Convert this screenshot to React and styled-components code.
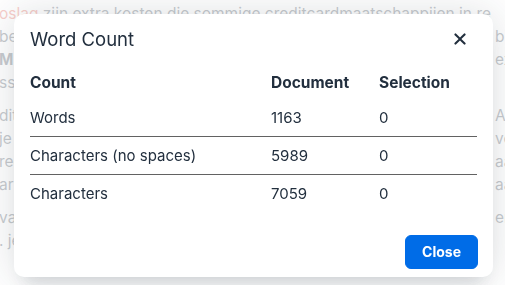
import React from 'react';
import styled, { createGlobalStyle } from 'styled-components';

const rows = [
    { label: 'Words', document: 1163, selection: 0 },
    { label: 'Characters (no spaces)', document: 5989, selection: 0 },
    { label: 'Characters', document: 7059, selection: 0 },
];

// the article behind the dialog: only the edges of each line show
function backgroundText() {
    return [
        [
            [<><Flagged>oslag</Flagged> zijn extra kosten die sommige creditcardmaatschappijen in re</>, ''],
            ['bedrijven die betalingen accepteren', 'bij'],
            [<><strong>MIF</strong> is de interchange fee</>, 'extra'],
            ['ssen de banken', ''],
        ],
        [
            ['dit zijn de kosten van de bank', 'ABN'],
            ['je betaalt per transactie', 'verder'],
            ['regels van de kaartmaatschappij', 'aan'],
            ['ar de bedragen per maand', 'aan'],
        ],
        [
            ['va de rekening', 'er'],
            ['. je ontvangt een overzicht', ''],
        ],
    ];
}

export default function App () {
    return (
        <>
            <GlobalStyle />
            <Page>
                {backgroundText().map((para, i) => (
                    <Paragraph key={i}>
                        {para.map(([start, end], j) => (
                            <Line key={j}>
                                <LineStart>{start}</LineStart>
                                <LineEnd>{end}</LineEnd>
                            </Line>
                        ))}
                    </Paragraph>
                ))}
            </Page>
            <Backdrop>
                <Dialog role="dialog">
                    <Header>
                        <Title>Word Count</Title>
                        <IconButton aria-label="Close">
                            <svg width="24" height="24" viewBox="0 0 24 24">
                                <path
                                    d="M17.3 8.2 13.4 12l3.9 3.8a1 1 0 0 1-1.5 1.5L12 13.4l-3.8 3.9a1 1 0 0 1-1.5-1.5l3.9-3.8-3.9-3.8a1 1 0 0 1 1.5-1.5l3.8 3.9 3.8-3.9a1 1 0 0 1 1.5 1.5Z"
                                    fill="currentColor"
                                />
                            </svg>
                        </IconButton>
                    </Header>
                    <Body>
                        <Table>
                            <thead>
                                <tr>
                                    <Th $width="241px">Count</Th>
                                    <Th $width="108px">Document</Th>
                                    <Th>Selection</Th>
                                </tr>
                            </thead>
                            <tbody>
                                {rows.map(row => (
                                    <Tr key={row.label}>
                                        <Td>{row.label}</Td>
                                        <Td>{row.document}</Td>
                                        <Td>{row.selection}</Td>
                                    </Tr>
                                ))}
                            </tbody>
                        </Table>
                    </Body>
                    <Footer>
                        <PrimaryButton>Close</PrimaryButton>
                    </Footer>
                </Dialog>
            </Backdrop>
        </>
    );
}

const GlobalStyle = createGlobalStyle`
    html, body {
        margin: 0;
        padding: 0;
        background: #fff;
        overflow: hidden;
    }
    body {
        font-family: Inter, "Noto Sans", sans-serif;
        color: #222f3e;
    }
`;

const Page = styled.div`
    width: 505px;
    height: 285px;
    overflow: hidden;
    padding-top: 2px;
    box-sizing: border-box;
`;

const Paragraph = styled.p`
    margin: 0 0 10px;
    font-size: 15.5px;
    line-height: 23px;
    color: #222f3e;
`;

const Line = styled.div`
    display: flex;
    justify-content: space-between;
    white-space: nowrap;
    margin-left: -1px;
`;

const LineStart = styled.span`
    flex: 1;
    overflow: hidden;
`;

const LineEnd = styled.span`
    flex: 0 0 10px;
    overflow: hidden;
`;

const Flagged = styled.span`
    color: #e03e2d;
`;

const Backdrop = styled.div`
    position: fixed;
    inset: 0;
    background: rgba(255, 255, 255, 0.75);
    display: flex;
    align-items: center;
    justify-content: center;
`;

const Dialog = styled.div`
    width: 479px;
    margin: 5px 0 0 2px;
    background: #fff;
    border-radius: 10px;
    box-shadow: 0 16px 16px -10px rgba(34, 47, 62, 0.15), 0 0 40px 1px rgba(34, 47, 62, 0.15);
    display: flex;
    flex-direction: column;
`;

const Header = styled.div`
    display: flex;
    align-items: center;
    justify-content: space-between;
    padding: 8px 16px 0 16px;
`;

const Title = styled.h1`
    margin: 0;
    font-size: 18.5px;
    font-weight: 400;
    line-height: 26px;
    color: #222f3e;
`;

const IconButton = styled.button`
    width: 34px;
    height: 34px;
    padding: 0;
    border: 0;
    background: transparent;
    color: #222f3e;
    display: flex;
    align-items: center;
    justify-content: center;
    cursor: pointer;
`;

const Body = styled.div`
    padding: 16px 16px 15px;
`;

const Table = styled.table`
    width: 100%;
    border-collapse: collapse;
    font-size: 15px;
    line-height: 21px;
    color: #222f3e;
`;

const Th = styled.th`
    text-align: left;
    font-weight: 700;
    font-size: 15.5px;
    padding: 0 0 6px;
    width: ${p => p.$width || 'auto'};
`;

const Tr = styled.tr`
    border-bottom: 1px solid #626262;
    &:last-child {
        border-bottom: none;
    }
`;

const Td = styled.td`
    padding: 8px 0;
    text-align: left;
`;

const Footer = styled.div`
    display: flex;
    justify-content: flex-end;
    padding: 8px 15px 8px 16px;
`;

const PrimaryButton = styled.button`
    box-sizing: border-box;
    height: 34px;
    font-family: inherit;
    font-size: 14px;
    font-weight: 700;
    line-height: 24px;
    padding: 4px 16px;
    border: 1px solid #006ce7;
    border-radius: 6px;
    background: #006ce7;
    color: #fff;
    cursor: pointer;
`;
